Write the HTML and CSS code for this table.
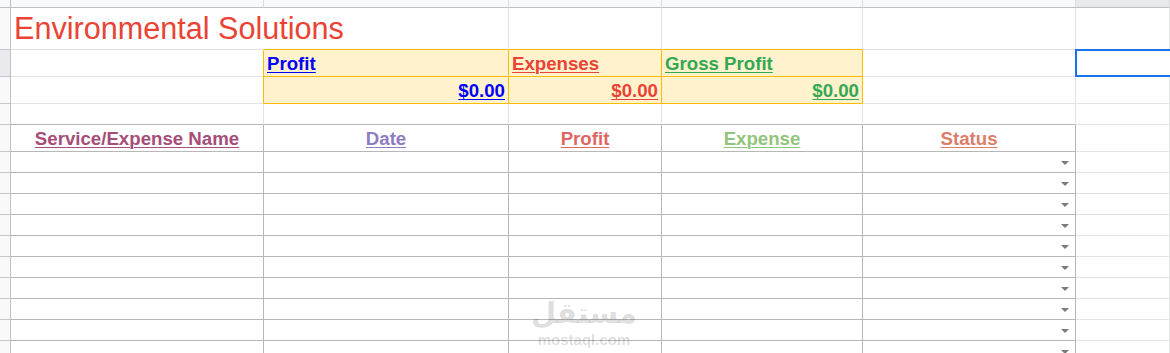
FILE: index.html
```html
<!DOCTYPE html>
<html lang="en">
<head>
<meta charset="utf-8">
<title>Environmental Solutions</title>
<link rel="stylesheet" href="styles.css">
</head>
<body>
<div class="sheet">
  <div class="grid">
    <!-- column header strip -->
    <div class="corner"></div>
    <div class="ch"></div><div class="ch"></div><div class="ch"></div><div class="ch"></div><div class="ch"></div><div class="ch ch-sel"></div>

    <!-- row 1: title -->
    <div class="rh"></div>
    <div class="c title-cell"><span class="title">Environmental Solutions</span></div>
    <div class="c box-top"></div><div class="c box-top"></div><div class="c box-top"></div>
    <div class="c"></div><div class="c"></div>

    <!-- row 2: summary labels -->
    <div class="rh rh-sel"></div>
    <div class="c box-left"></div>
    <div class="c box"><u class="lbl blue">Profit</u></div>
    <div class="c box"><u class="lbl red">Expenses</u></div>
    <div class="c box"><u class="lbl green">Gross Profit</u></div>
    <div class="c"></div>
    <div class="c sel"><span class="sel-ring"></span></div>

    <!-- row 3: summary values -->
    <div class="rh"></div>
    <div class="c box-left"></div>
    <div class="c box num"><u class="lbl blue">$0.00</u></div>
    <div class="c box num"><u class="lbl red">$0.00</u></div>
    <div class="c box num"><u class="lbl green">$0.00</u></div>
    <div class="c"></div><div class="c"></div>

    <!-- row 4: spacer -->
    <div class="rh"></div>
    <div class="c t-top"></div><div class="c t-top"></div><div class="c t-top"></div><div class="c t-top"></div><div class="c t-top"></div>
    <div class="c"></div>

    <!-- row 5: table header -->
    <div class="rh"></div>
    <div class="c t hd"><u class="lbl c-name">Service/Expense Name</u></div>
    <div class="c t hd"><u class="lbl c-date">Date</u></div>
    <div class="c t hd"><u class="lbl c-profit">Profit</u></div>
    <div class="c t hd"><u class="lbl c-exp">Expense</u></div>
    <div class="c t hd"><u class="lbl c-status">Status</u></div>
    <div class="c"></div>

    <!-- data rows -->
    <div class="rh"></div><div class="c t"></div><div class="c t"></div><div class="c t"></div><div class="c t"></div><div class="c t dd"><span class="arrow"></span></div><div class="c"></div>
    <div class="rh"></div><div class="c t"></div><div class="c t"></div><div class="c t"></div><div class="c t"></div><div class="c t dd"><span class="arrow"></span></div><div class="c"></div>
    <div class="rh"></div><div class="c t"></div><div class="c t"></div><div class="c t"></div><div class="c t"></div><div class="c t dd"><span class="arrow"></span></div><div class="c"></div>
    <div class="rh"></div><div class="c t"></div><div class="c t"></div><div class="c t"></div><div class="c t"></div><div class="c t dd"><span class="arrow"></span></div><div class="c"></div>
    <div class="rh"></div><div class="c t"></div><div class="c t"></div><div class="c t"></div><div class="c t"></div><div class="c t dd"><span class="arrow"></span></div><div class="c"></div>
    <div class="rh"></div><div class="c t"></div><div class="c t"></div><div class="c t"></div><div class="c t"></div><div class="c t dd"><span class="arrow"></span></div><div class="c"></div>
    <div class="rh"></div><div class="c t"></div><div class="c t"></div><div class="c t"></div><div class="c t"></div><div class="c t dd"><span class="arrow"></span></div><div class="c"></div>
    <div class="rh"></div><div class="c t"></div><div class="c t"></div><div class="c t"></div><div class="c t"></div><div class="c t dd"><span class="arrow"></span></div><div class="c"></div>
    <div class="rh"></div><div class="c t"></div><div class="c t"></div><div class="c t"></div><div class="c t"></div><div class="c t dd"><span class="arrow"></span></div><div class="c"></div>
    <div class="rh"></div><div class="c t"></div><div class="c t"></div><div class="c t"></div><div class="c t"></div><div class="c t dd"><span class="arrow"></span></div><div class="c"></div>
  </div>

  <div class="watermark">
    <span class="wm-ar" lang="ar" dir="rtl">مستقل</span>
    <span class="wm-en">mostaql.com</span>
  </div>
</div>
</body>
</html>
```

FILE: styles.css
```css
* { box-sizing: border-box; }

html, body {
  margin: 0;
  padding: 0;
  background: #ffffff;
  overflow: hidden;
}

body {
  font-family: "Liberation Sans", Arial, sans-serif;
}

.sheet {
  position: relative;
  width: 1170px;
  height: 353px;
  overflow: hidden;
}

.grid {
  display: grid;
  grid-template-columns: 11px 253px 245px 153px 201px 213px 94px;
  grid-template-rows: 8px 42px 27px 27px 21px 27px repeat(10, 21px);
}

/* generic cell */
.c {
  border-right: 1px solid #e2e3e3;
  border-bottom: 1px solid #e2e3e3;
  display: flex;
  align-items: flex-end;
  padding: 0 3px 2px 3px;
  min-width: 0;
  white-space: nowrap;
}

/* headers */
.corner {
  background: #f8f9fa;
  border-right: 1px solid #c0c0c0;
  border-bottom: 1px solid #c0c0c0;
}
.ch {
  background: #f8f9fa;
  border-right: 1px solid #dadce0;
  border-bottom: 1px solid #c0c0c0;
}
.ch-sel { background: #e8eaed; }

.rh {
  background: #f8f9fa;
  border-right: 1px solid #c0c0c0;
  border-bottom: 1px solid #c4c7c5;
}
.rh-sel { background: #e8eaed; }

/* title */
.title-cell {
  border-right-color: transparent;
  position: relative;
  z-index: 1;
  overflow: visible;
  padding-bottom: 3px;
}
.title {
  font-size: 30.6px;
  line-height: 1.15;
  color: #ea4335;
}

/* orange summary box */
.box-top { border-bottom-color: #fbbc04; }
.box-left { border-right-color: #fbbc04; }
.box {
  background: #fff2cc;
  border-right-color: #fbbc04;
  border-bottom-color: #fbbc04;
}
.num { justify-content: flex-end; }

.lbl {
  font-size: 18.67px;
  line-height: 1.15;
  font-weight: bold;
  text-decoration: underline;
  text-decoration-thickness: 1px;
  text-underline-offset: 2px;
}
.blue { color: #0000ff; }
.red { color: #ea4335; }
.green { color: #34a853; }

/* table */
.t-top { border-bottom-color: #b7b7b7; }
.t {
  border-right-color: #b7b7b7;
  border-bottom-color: #b7b7b7;
}
.hd {
  justify-content: center;
  padding-bottom: 2px;
}
.c-name { color: #a64d79; }
.c-date { color: #8e7cc3; }
.c-profit { color: #e06666; }
.c-exp { color: #93c47d; }
.c-status { color: #dd7e6b; }

.dd {
  align-items: center;
  justify-content: flex-end;
  padding: 2px 6px 0 0;
}
.arrow {
  width: 0;
  height: 0;
  border-left: 4px solid transparent;
  border-right: 4px solid transparent;
  border-top: 4px solid #7a7a7a;
}

/* selected cell */
.sel {
  position: relative;
  border-right-color: transparent;
}
.sel-ring {
  position: absolute;
  top: -1px;
  left: -1px;
  right: -40px;
  bottom: -1px;
  border: 2px solid #1a73e8;
}

/* watermark overlay */
.watermark {
  position: absolute;
  left: 535px;
  top: 294px;
  width: 98px;
  display: flex;
  flex-direction: column;
  align-items: center;
  color: rgba(0, 0, 0, 0.15);
  font-weight: bold;
  pointer-events: none;
}
.wm-ar {
  font-family: "DejaVu Sans", sans-serif;
  font-size: 29px;
  line-height: 38px;
}
.wm-en {
  font-family: "Liberation Sans", Arial, sans-serif;
  font-size: 15px;
  line-height: 16px;
}
```
